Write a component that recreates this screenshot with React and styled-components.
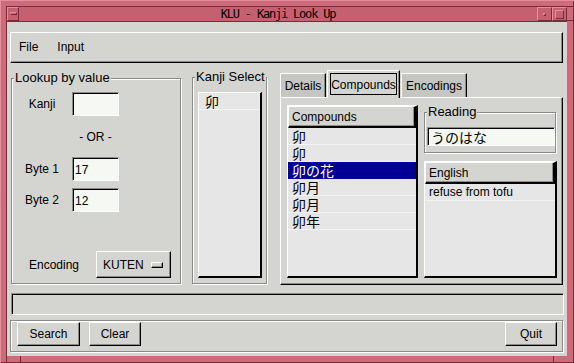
import React from "react";
import styled, { createGlobalStyle, css } from "styled-components";

const C = {
  bg: "#d4d5d0",
  dark: "#8b8b88",
  black: "#000",
  white: "#fff",
  list: "#e6e6e6",
  rowLine: "#f3f3f3",
  entry: "#f5f8f3",
  tab: "#c5c6c1",
  sel: "#000096",
  pink: "#cd6b7b",
  pinkTitle: "#c4606f",
  pinkLight: "#e48f9c",
  pinkDark: "#7c2a3a",
};

const Global = createGlobalStyle`
  html, body { margin: 0; padding: 0; background: ${C.pink}; overflow: hidden; }
  body { font-family: "Liberation Sans", Arial, sans-serif; font-size: 12px; color: #000; }
  * { box-sizing: border-box; }
`;

const raised = css`
  border-style: solid;
  border-width: 1px;
  border-color: ${C.white} ${C.black} ${C.black} ${C.white};
  box-shadow: inset -1px -1px 0 ${C.dark};
`;
const sunken = css`
  border-style: solid;
  border-width: 1px;
  border-color: ${C.dark} ${C.white} ${C.white} ${C.dark};
  box-shadow: inset 1px 1px 0 ${C.black};
`;
const etched = css`
  border: 1px solid ${C.dark};
  box-shadow: inset 1px 1px 0 ${C.white}, 1px 1px 0 ${C.white};
`;
const cjkFont = `"Noto Sans CJK JP", "Liberation Sans", sans-serif`;

const Window = styled.div`
  width: 574px;
  height: 363px;
  display: flex;
  flex-direction: column;
  padding: 7px;
  background-color: ${C.pink};
  background-image:
    linear-gradient(${C.pinkDark}, ${C.pinkDark}),
    linear-gradient(${C.pinkDark}, ${C.pinkDark}),
    linear-gradient(${C.pinkDark}, ${C.pinkDark}),
    linear-gradient(${C.pinkDark}, ${C.pinkDark}),
    linear-gradient(${C.pinkDark}, ${C.pinkDark}),
    linear-gradient(${C.pinkDark}, ${C.pinkDark});
  background-size: 1px 7px, 1px 7px, 1px 7px, 1px 7px, 7px 1px, 7px 1px;
  background-position: 20px 0, 553px 0, 20px 356px, 553px 356px, 0 20px, 567px 20px;
  background-repeat: no-repeat;
  box-shadow: inset 1px 1px 0 ${C.pinkLight}, inset -1px -1px 0 ${C.pinkDark},
    inset 6px 6px 0 ${C.pink}, inset 7px 7px 0 ${C.pinkDark};
`;

const TitleBar = styled.div`
  flex: none;
  height: 15px;
  display: flex;
  align-items: stretch;
  background: ${C.pinkTitle};
  border-bottom: 1px solid ${C.pinkDark};
`;

const FrameBtn = styled.div`
  flex: none;
  width: ${(p) => p.$w}px;
  display: flex;
  align-items: center;
  justify-content: center;
  border-style: solid;
  border-width: 1px;
  border-color: ${C.pinkLight} ${C.pinkDark} ${C.pinkDark} ${C.pinkLight};
`;

const Glyph = styled.span`
  width: ${(p) => p.$w}px;
  height: ${(p) => p.$h}px;
  margin-bottom: ${(p) => p.$mb || 0}px;
  border-style: solid;
  border-width: 1px;
  border-color: ${C.pinkLight} ${C.pinkDark} ${C.pinkDark} ${C.pinkLight};
`;

const Title = styled.div`
  flex: 1;
  text-align: center;
  font-family: "DejaVu Sans Mono", "Liberation Mono", monospace;
  font-size: 12px;
  letter-spacing: -1.2px;
  line-height: 14px;
  color: #000;
`;

const Content = styled.div`
  flex: 1;
  min-height: 0;
  background: ${C.bg};
  display: flex;
  flex-direction: column;
  padding: 10px 4px 4px 3px;
`;

const MenuBar = styled.div`
  flex: none;
  height: 31px;
  ${raised};
  display: flex;
  align-items: center;
  gap: 19px;
  padding: 0 0 1px 8px;
`;

const MenuItem = styled.span`
  font-size: 12px;
`;

const MainRow = styled.div`
  flex: none;
  height: 215px;
  margin-top: 7px;
  display: flex;
  align-items: stretch;
`;

const Group = styled.div`
  position: relative;
  ${etched};
  display: flex;
  flex-direction: column;
  flex: none;
  width: ${(p) => p.$w}px;
  margin: ${(p) => p.$mt}px 0 1px ${(p) => p.$ml}px;
  padding: ${(p) => p.$pad};
`;

const Legend = styled.span`
  position: absolute;
  top: -8px;
  left: 2px;
  padding: 0 1px;
  background: ${C.bg};
  font-size: 13px;
  line-height: 14px;
  white-space: nowrap;
`;

const FieldGrid = styled.div`
  display: grid;
  grid-template-columns: 60px 47px;
  grid-template-rows: 24px 27px 24px 24px;
  row-gap: 7px;
`;

const FieldLabel = styled.span`
  align-self: center;
  text-align: center;
  font-size: 12px;
`;

const Or = styled.span`
  grid-column: 2;
  align-self: center;
  text-align: center;
  font-size: 12px;
`;

const Entry = styled.div`
  ${sunken};
  background: ${C.entry};
  display: flex;
  align-items: center;
  padding: 1px 0 0 2px;
  font-size: 12px;
  line-height: 16px;
`;

const ReadingEntry = styled(Entry)`
  flex: 1;
  padding-left: 3px;
`;

const CjkText = styled.span`
  font-family: ${cjkFont};
  font-size: 14px;
  line-height: 16px;
`;

const EncodingRow = styled.div`
  margin-top: auto;
  margin-bottom: 5px;
  display: flex;
  align-items: center;
  gap: 17px;
  padding-left: 17px;
`;

const OptionButton = styled.div`
  width: 75px;
  height: 27px;
  ${raised};
  display: flex;
  align-items: center;
  justify-content: space-between;
  padding: 0 7px 0 6px;
  font-size: 12px;
`;

const Indicator = styled.span`
  width: 12px;
  height: 6px;
  ${raised};
`;

const CList = styled.div`
  display: flex;
  flex-direction: column;
  background: ${C.list};
  border-style: solid;
  border-width: 1px 2px 2px 1px;
  border-color: ${C.white} ${C.black} ${C.black} ${C.white};
  overflow: hidden;
  flex: ${(p) => (p.$grow ? 1 : "none")};
  width: ${(p) => (p.$w ? `${p.$w}px` : "auto")};
  margin: ${(p) => p.$m || 0};
`;

const ListHeader = styled.div`
  flex: none;
  height: 22px;
  ${raised};
  border-right-width: 2px;
  border-bottom-width: 2px;
  background: ${C.bg};
  display: flex;
  align-items: center;
  padding-left: 3px;
  font-size: 12px;
`;

const Row = styled.div`
  flex: none;
  height: 17px;
  display: flex;
  align-items: center;
  padding-left: ${(p) => p.$pl ?? 4}px;
  border-bottom: 1px solid ${(p) => (p.$sel ? C.sel : C.rowLine)};
  background: ${(p) => (p.$sel ? C.sel : "transparent")};
  color: ${(p) => (p.$sel ? C.white : C.black)};
  font-size: 12px;
  line-height: 16px;
  white-space: nowrap;
`;

const Notebook = styled.div`
  flex: 1;
  margin-left: 13px;
  display: flex;
  flex-direction: column;
`;

const TabRow = styled.div`
  flex: none;
  height: 27px;
  display: flex;
  align-items: flex-end;
  gap: 1px;
`;

const Tab = styled.div`
  flex: none;
  width: ${(p) => p.$w}px;
  height: ${(p) => (p.$active ? 28 : 24)}px;
  position: relative;
  z-index: ${(p) => (p.$active ? 1 : 0)};
  margin-bottom: ${(p) => (p.$active ? -1 : 0)}px;
  background: ${(p) => (p.$active ? C.bg : C.tab)};
  border-style: solid;
  border-width: 1px 1px 0 1px;
  border-color: ${C.white} ${C.black} transparent ${C.white};
  box-shadow: inset -1px 0 0 ${C.dark};
  display: flex;
  align-items: center;
  justify-content: center;
  padding: ${(p) => (p.$active ? "2px 2px 3px" : "1px 0 0")};
  font-size: 12px;
`;

const FocusRect = styled.span`
  flex: 1;
  align-self: stretch;
  border: 1px solid ${C.black};
  display: flex;
  align-items: center;
  justify-content: center;
  padding-top: 2px;
`;

const Panel = styled.div`
  flex: 1;
  ${raised};
  display: flex;
  padding: 7px 5px 6px 6px;
`;

const SideColumn = styled.div`
  flex: 1;
  margin-left: 5px;
  display: flex;
  flex-direction: column;
`;

const StatusBar = styled.div`
  flex: none;
  height: 22px;
  margin: 8px -1px 0 1px;
  ${sunken};
`;

const ButtonBar = styled.div`
  flex: none;
  height: 32px;
  margin-top: 5px;
  ${etched};
  display: flex;
  align-items: flex-start;
  gap: 9px;
  padding: 1px 5px 0 6px;
`;

const PushButton = styled.div`
  flex: none;
  width: ${(p) => p.$w}px;
  height: 24px;
  ${raised};
  display: flex;
  align-items: center;
  justify-content: center;
  font-size: 12px;
  margin-left: ${(p) => (p.$push ? "auto" : "0")};
`;

const compounds = ["卯", "卯", "卯の花", "卯月", "卯月", "卯年"];

export default function App() {
  return (
    <>
      <Global />
      <Window>
        <TitleBar>
          <FrameBtn $w={12}>
            <Glyph $w={7} $h={3} $mb={2} />
          </FrameBtn>
          <Title>KLU - Kanji Look Up</Title>
          <FrameBtn $w={15}>
            <Glyph $w={3} $h={3} />
          </FrameBtn>
          <FrameBtn $w={15}>
            <Glyph $w={9} $h={9} />
          </FrameBtn>
        </TitleBar>
        <Content>
          <MenuBar>
            <MenuItem>File</MenuItem>
            <MenuItem>Input</MenuItem>
          </MenuBar>
          <MainRow>
            <Group $w={170} $mt={8} $ml={1} $pad="13px 0 0 0">
              <Legend>Lookup by value</Legend>
              <FieldGrid>
                <FieldLabel>Kanji</FieldLabel>
                <Entry />
                <Or>- OR -</Or>
                <FieldLabel>Byte 1</FieldLabel>
                <Entry>17</Entry>
                <FieldLabel>Byte 2</FieldLabel>
                <Entry>12</Entry>
              </FieldGrid>
              <EncodingRow>
                <span>Encoding</span>
                <OptionButton>
                  <span>KUTEN</span>
                  <Indicator />
                </OptionButton>
              </EncodingRow>
            </Group>
            <Group $w={75} $mt={7} $ml={11} $pad="14px 4px 5px 5px">
              <Legend>Kanji Select</Legend>
              <CList $grow>
                <Row $pl={6}>
                  <CjkText>卯</CjkText>
                </Row>
              </CList>
            </Group>
            <Notebook>
              <TabRow>
                <Tab $w={46}>Details</Tab>
                <Tab $w={73} $active>
                  <FocusRect>Compounds</FocusRect>
                </Tab>
                <Tab $w={66}>Encodings</Tab>
              </TabRow>
              <Panel>
                <CList $w={131}>
                  <ListHeader>Compounds</ListHeader>
                  {compounds.map((c, i) => (
                    <Row key={i} $sel={i === 2}>
                      <CjkText>{c}</CjkText>
                    </Row>
                  ))}
                </CList>
                <SideColumn>
                  <Group $w={132} $mt={7} $ml={1} $pad="14px 0 6px 2px">
                    <Legend>Reading</Legend>
                    <ReadingEntry>
                      <CjkText>うのはな</CjkText>
                    </ReadingEntry>
                  </Group>
                  <CList $grow $m="7px 0 0 1px">
                    <ListHeader>English</ListHeader>
                    <Row>refuse from tofu</Row>
                  </CList>
                </SideColumn>
              </Panel>
            </Notebook>
          </MainRow>
          <StatusBar />
          <ButtonBar>
            <PushButton $w={63}>Search</PushButton>
            <PushButton $w={52}>Clear</PushButton>
            <PushButton $w={52} $push>
              Quit
            </PushButton>
          </ButtonBar>
        </Content>
      </Window>
    </>
  );
}
